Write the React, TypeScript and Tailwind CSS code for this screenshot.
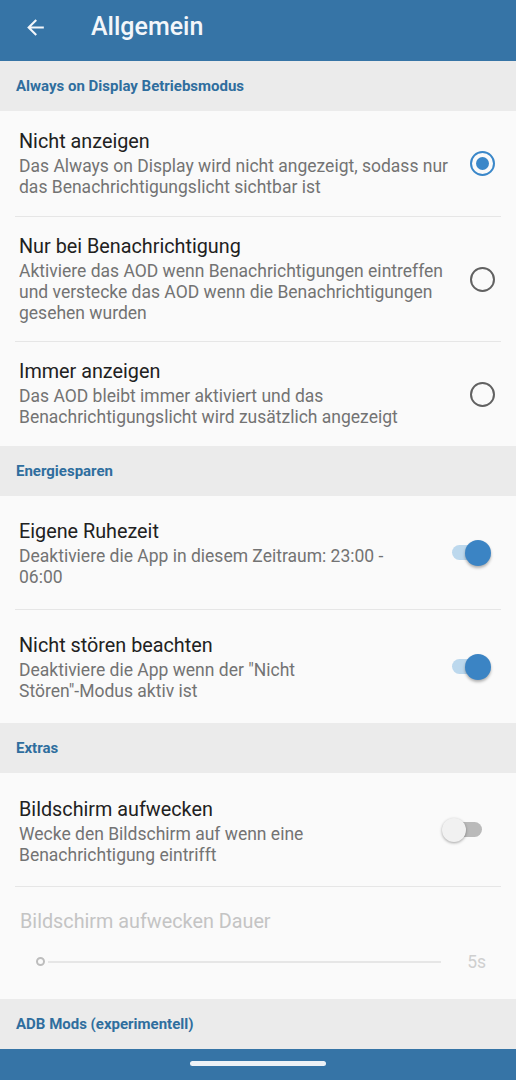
import React from "react";

const Section = ({ title }: { title: string }) => (
  <div className="h-[50px] bg-[#ebebeb] flex items-center px-4 text-[15px] font-bold text-[#2f6e9e]">{title}</div>
);

const Divider = () => <div className="mx-[15px] h-px bg-[#e6e6e6]" />;

const Radio = ({ on }: { on?: boolean }) => (
  <div className={"w-[25px] h-[25px] rounded-full border-2 flex items-center justify-center " + (on ? "border-[#3a87c9]" : "border-[#616161]")}>
    {on && <div className="w-[13px] h-[13px] rounded-full bg-[#3a87c9]" />}
  </div>
);

const Switch = ({ on }: { on?: boolean }) =>
  on ? (
    <div className="relative w-[40px] h-[26px] flex items-center">
      <div className="ml-[1px] w-[34px] h-[15px] rounded-full bg-[#bcd8ed]" />
      <div className="absolute right-0 top-0 w-[26px] h-[26px] rounded-full bg-[#3b84c4] shadow-[0_2px_3px_rgba(0,0,0,0.3)]" />
    </div>
  ) : (
    <div className="relative w-[40px] h-[24px] flex items-center">
      <div className="ml-[6px] w-[34px] h-[15px] rounded-full bg-[#bababa]" />
      <div className="absolute left-0 top-0 w-[24px] h-[24px] rounded-full bg-[#f1f1f1] shadow-[0_1px_3px_rgba(0,0,0,0.35)]" />
    </div>
  );

const Row = ({
  title,
  lines,
  h,
  right,
  pr,
  pt = "",
}: {
  title: string;
  lines: string[];
  h: string;
  right: React.ReactNode;
  pr: string;
  pt?: string;
}) => (
  <div className={"flex items-center pl-[19px] " + h + " " + pr}>
    <div className={"flex-1 " + pt}>
      <div className="text-[19.8px] leading-[24px] text-[#212121]">{title}</div>
      <div className="mt-[2px] text-[17.5px] leading-[21px] text-[#737373]">
        {lines.map((l) => (
          <div key={l} className="whitespace-nowrap">{l}</div>
        ))}
      </div>
    </div>
    {right}
  </div>
);

export default function App() {
  return (
    <div className="w-[516px] h-[1080px] bg-[#fafafa] flex flex-col overflow-hidden" style={{ fontFamily: "Roboto, 'Noto Sans', sans-serif" }}>
      <div className="h-[61px] bg-[#3674a6] flex items-center pb-[7px]">
        <svg className="ml-[23px]" width="25" height="25" viewBox="0 0 24 24" fill="#f3f6fa">
          <path d="M20 11H7.83l5.59-5.59L12 4l-8 8 8 8 1.41-1.41L7.83 13H20v-2z" />
        </svg>
        <div className="ml-[43px] text-[25px] font-medium text-[#f3f6fa] leading-none pb-[1px]">Allgemein</div>
      </div>

      <Section title="Always on Display Betriebsmodus" />
      <Row
        h="h-[105px]"
        pr="pr-[21px]"
        title="Nicht anzeigen"
        lines={["Das Always on Display wird nicht angezeigt, sodass nur", "das Benachrichtigungslicht sichtbar ist"]}
        right={<Radio on />}
      />
      <Divider />
      <Row
        h="h-[124px]"
        pr="pr-[21px]"
        title="Nur bei Benachrichtigung"
        lines={["Aktiviere das AOD wenn Benachrichtigungen eintreffen", "und verstecke das AOD wenn die Benachrichtigungen", "gesehen wurden"]}
        right={<Radio />}
      />
      <Divider />
      <Row
        h="h-[104px]"
        pr="pr-[21px]"
        title="Immer anzeigen"
        lines={["Das AOD bleibt immer aktiviert und das", "Benachrichtigungslicht wird zusätzlich angezeigt"]}
        right={<Radio />}
      />

      <Section title="Energiesparen" />
      <Row
        h="h-[113px]"
        pr="pr-[25px]"
        pt="pt-[3px]"
        title="Eigene Ruhezeit"
        lines={["Deaktiviere die App in diesem Zeitraum: 23:00 -", "06:00"]}
        right={<Switch on />}
      />
      <Divider />
      <Row
        h="h-[113px]"
        pr="pr-[25px]"
        pt="pt-[2px]"
        title="Nicht stören beachten"
        lines={["Deaktiviere die App wenn der \"Nicht", "Stören\"-Modus aktiv ist"]}
        right={<Switch on />}
      />

      <Section title="Extras" />
      <Row
        h="h-[113px]"
        pr="pr-[34px]"
        pt="pt-[4px]"
        title="Bildschirm aufwecken"
        lines={["Wecke den Bildschirm auf wenn eine", "Benachrichtigung eintrifft"]}
        right={<Switch />}
      />
      <Divider />
      <div className="h-[112px] flex flex-col pl-[20px] pr-[30px]">
        <div className="mt-[23px] text-[19.8px] leading-[24px] text-[#c4c4c4]">Bildschirm aufwecken Dauer</div>
        <div className="mt-[18px] flex items-center">
          <div className="ml-[16px] w-[9px] h-[9px] rounded-full border-2 border-[#bdbdbd]" />
          <div className="ml-[3px] w-[393px] h-[2px] bg-[#e6e6e6]" />
          <div className="ml-auto text-[17.5px] text-[#cfcfcf] leading-none pt-[2px]">5s</div>
        </div>
      </div>

      <Section title="ADB Mods (experimentell)" />
      <div className="flex-1 bg-[#3674a6] flex items-center justify-center">
        <div className="w-[136px] h-[5px] rounded-full bg-[#edf1f6] mb-[3px]" />
      </div>
    </div>
  );
}
